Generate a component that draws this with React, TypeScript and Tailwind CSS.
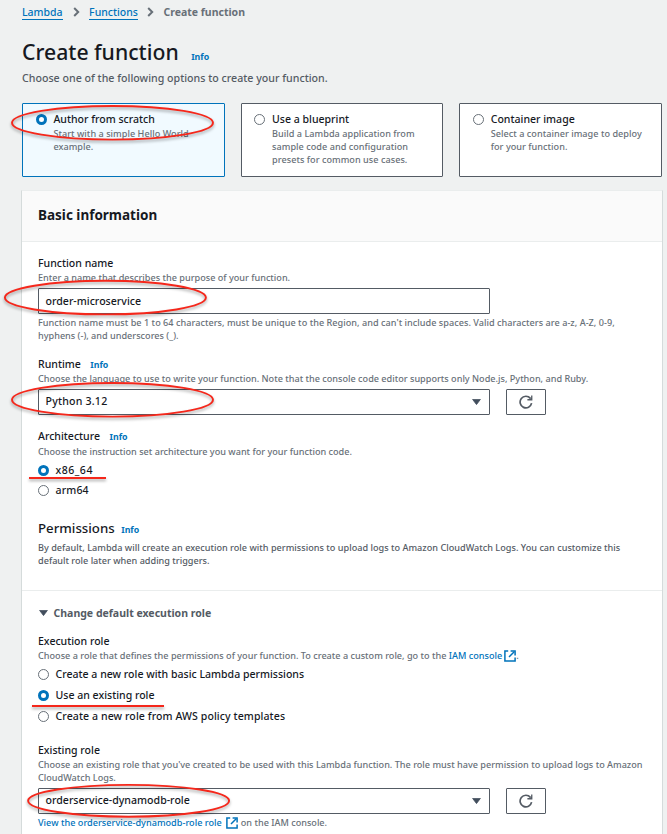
import type { ReactNode } from "react";

function Radio({ checked = false, className = "" }: { checked?: boolean; className?: string }) {
  return (
    <span
      className={`block size-[11px] shrink-0 rounded-full bg-white ${
        checked ? "border-[3.5px] border-[#0073bb]" : "border border-[#687078]"
      } ${className}`}
    />
  );
}

function Info({ className = "" }: { className?: string }) {
  return <a className={`text-[8.8px] font-bold text-[#0073bb] ${className}`}>Info</a>;
}

function Chevron() {
  return (
    <svg width="7" height="10" viewBox="0 0 7 10" fill="none" stroke="#687078" strokeWidth="2">
      <path d="M1.2 1 5.2 5 1.2 9" />
    </svg>
  );
}

function Caret() {
  return (
    <svg width="9" height="6" viewBox="0 0 9 6" className="shrink-0">
      <path d="M0.6 0.4H8.4L4.5 5.6Z" fill="#414d5c" stroke="#414d5c" strokeWidth="0.8" strokeLinejoin="round" />
    </svg>
  );
}

function RefreshButton() {
  return (
    <button className="flex h-[26px] w-10 items-center justify-center rounded-[1px] border border-[#545b64] bg-white">
      <svg width="14" height="14" viewBox="0 0 14 14" fill="none" stroke="#545b64" strokeWidth="1.7">
        <path d="M12.6 8.2A5.8 5.8 0 1 1 11.4 3.4" />
        <path d="M13.4 0.4V5.4H8.4V4.1H10.6L12.1 2.8V0.4Z" fill="#545b64" stroke="none" />
      </svg>
    </button>
  );
}

function ExternalIcon() {
  return (
    <svg width="12" height="12" viewBox="0 0 12 12" fill="none" stroke="#0073bb" strokeWidth="1.5" className="shrink-0">
      <path d="M4.2 0.9H0.9V11.1H11.1V7.6" />
      <path d="M10.2 1.8 5 7" />
      <path d="M6.6 0.9H11.1V5.4" />
    </svg>
  );
}

function Small({
  children,
  color = "text-[#687078]",
  className = "",
}: {
  children: ReactNode;
  color?: string;
  className?: string;
}) {
  return (
    <p className={`text-[9.12px] leading-[13px] font-medium whitespace-nowrap ${color} ${className}`}>{children}</p>
  );
}

function Label({ children, className = "" }: { children: ReactNode; className?: string }) {
  return (
    <h3 className={`flex h-4 items-baseline text-[10.55px] leading-4 font-medium whitespace-nowrap ${className}`}>
      {children}
    </h3>
  );
}

function Card({ title, lines, selected = false }: { title: string; lines: string[]; selected?: boolean }) {
  return (
    <div
      className={`flex h-[74px] gap-[6.8px] rounded-[1px] border pt-[7px] pl-[12.6px] ${
        selected ? "border-[#0073bb] bg-[#f1faff]" : "border-[#545b64] bg-white"
      }`}
    >
      <Radio checked={selected} className="mt-[3px]" />
      <div>
        <Label>{title}</Label>
        {lines.map((line) => (
          <Small key={line} className="tracking-[0.03px]">
            {line}
          </Small>
        ))}
      </div>
    </div>
  );
}

function Option({
  label,
  checked = false,
  className = "",
  textClass = "",
}: {
  label: string;
  checked?: boolean;
  className?: string;
  textClass?: string;
}) {
  return (
    <div className={`flex h-4 items-center gap-[6.5px] ${className}`}>
      <Radio checked={checked} className="mt-px" />
      <span className={`text-[10.55px] leading-4 font-medium whitespace-nowrap ${textClass}`}>{label}</span>
    </div>
  );
}

function Field({ value, select = false, textClass = "" }: { value: string; select?: boolean; textClass?: string }) {
  return (
    <div className="flex h-[26px] w-[452px] items-center justify-between rounded-[1px] border border-[#545b64] bg-white pr-2 pl-[6.5px]">
      <span className={`text-[10.6px] leading-4 font-medium ${select ? "pb-[2px]" : ""} ${textClass}`}>{value}</span>
      {select && <Caret />}
    </div>
  );
}

function Annotations() {
  return (
    <svg
      width="667"
      height="834"
      viewBox="0 0 667 834"
      fill="none"
      stroke="#f5271b"
      strokeWidth="1.9"
      className="pointer-events-none absolute top-0 left-0 drop-shadow-[0_2px_1.5px_rgba(0,0,0,0.35)]"
    >
      <ellipse cx="112.5" cy="122.8" rx="100.5" ry="16.8" />
      <ellipse cx="105.4" cy="297.6" rx="100.5" ry="16.8" />
      <ellipse cx="112.5" cy="399.8" rx="100.5" ry="16.8" />
      <ellipse cx="128.6" cy="800.8" rx="100.5" ry="15.9" />
      <path d="M29 478H106M32 706H164" strokeWidth="2" />
    </svg>
  );
}

export default function App() {
  return (
    <div className="relative h-[834px] w-[667px] overflow-hidden bg-[#eff1f1] font-['Noto_Sans','Open_Sans',sans-serif] text-[#16191f]">
      <nav className="flex h-5 items-center pt-1 pl-[22px] text-[10.5px] leading-4 font-medium">
        <a className="h-4 border-b border-[#0073bb] text-[#0073bb]">Lambda</a>
        <span className="mr-[9.5px] ml-[10px]">
          <Chevron />
        </span>
        <a className="h-4 border-b border-[#0073bb] text-[#0073bb]">Functions</a>
        <span className="mr-[9px] ml-[9.5px]">
          <Chevron />
        </span>
        <span className="text-[10.5px] font-bold text-[#687078]">Create function</span>
      </nav>

      <header className="pt-[17px] pl-[22px]">
        <div className="flex h-[30px] items-baseline">
          <h1 className="text-[21.2px] leading-[30px] font-medium">Create function</h1>
          <Info className="ml-[12.5px]" />
        </div>
        <p className="mt-[3px] text-[10.65px] leading-4 font-medium text-[#545b64]">
          Choose one of the following options to create your function.
        </p>
      </header>

      <section className="mt-[17px] ml-[22px] grid w-[640px] grid-cols-3 gap-x-4">
        <Card title="Author from scratch" lines={["Start with a simple Hello World", "example."]} selected />
        <Card
          title="Use a blueprint"
          lines={["Build a Lambda application from", "sample code and configuration", "presets for common use cases."]}
        />
        <Card title="Container image" lines={["Select a container image to deploy", "for your function."]} />
      </section>

      <main className="mt-[13px] ml-[21px] h-[660px] w-[642px] border border-[#d5dbdb] border-t-[#eaeded] bg-white">
        <div className="flex h-[51px] items-center border-b border-[#eaeded] bg-[#fafafa] pb-[2px] pl-4">
          <h2 className="text-[13.5px] leading-5 font-bold">Basic information</h2>
        </div>

        <div className="pt-[13px] pl-4">
          <Label>Function name</Label>
          <Small>Enter a name that describes the purpose of your function.</Small>
          <div className="mt-1">
            <Field value="order-microservice" />
          </div>
          <Small className="mt-[2px] tracking-[0.03px]">
            Function name must be 1 to 64 characters, must be unique to the Region, and can't include spaces. Valid
            characters are a-z, A-Z, 0-9,
          </Small>
          <Small>hyphens (-), and underscores (_).</Small>

          <Label className="mt-[14px]">
            Runtime <Info className="ml-[9.5px]" />
          </Label>
          <Small>
            Choose the language to use to write your function. Note that the console code editor supports only Node.js,
            Python, and Ruby.
          </Small>
          <div className="mt-1 flex gap-4">
            <Field value="Python 3.12" select textClass="tracking-[0.2px]" />
            <RefreshButton />
          </div>

          <Label className="mt-[13px]">
            Architecture <Info className="ml-[9.5px]" />
          </Label>
          <Small className="mt-px">Choose the instruction set architecture you want for your function code.</Small>
          <Option className="mt-1" label="x86_64" checked textClass="tracking-[0.5px]" />
          <Option className="mt-1" label="arm64" textClass="tracking-[0.15px]" />

          <h2 className="mt-5 flex h-5 items-baseline text-[13.25px] leading-5 font-medium">
            Permissions <Info className="ml-[6.5px]" />
          </h2>
          <Small className="mt-[3px] tracking-[0.015px]" color="text-[#545b64]">
            By default, Lambda will create an execution role with permissions to upload logs to Amazon CloudWatch Logs.
            You can customize this
          </Small>
          <Small color="text-[#545b64]">default role later when adding triggers.</Small>
        </div>

        <div className="mt-[23px] border-t border-[#eaeded] pt-[14px] pl-4">
          <div className="flex h-4 items-center gap-[5.5px] pl-px text-[10.53px] leading-4 font-bold text-[#545b64]">
            <Caret />
            Change default execution role
          </div>

          <Label className="mt-3">Execution role</Label>
          <Small className="flex">
            Choose a role that defines the permissions of your function. To create a custom role, go to the
            <a className="ml-[2.5px] flex items-center gap-[2px] text-[#0073bb]">
              IAM console <ExternalIcon />
            </a>
            <span>.</span>
          </Small>
          <Option className="mt-1" label="Create a new role with basic Lambda permissions" />
          <Option className="mt-[5px]" label="Use an existing role" checked />
          <Option
            className="mt-[5px]"
            label="Create a new role from AWS policy templates"
            textClass="tracking-[0.09px]"
          />

          <Label className="mt-[18px]">Existing role</Label>
          <Small>
            Choose an existing role that you've created to be used with this Lambda function. The role must have
            permission to upload logs to Amazon
          </Small>
          <Small>CloudWatch Logs.</Small>
          <div className="mt-1 flex gap-4">
            <Field value="orderservice-dynamodb-role" select />
            <RefreshButton />
          </div>
          <Small className="mt-[2px] flex">
            <a className="mr-[3px] flex items-center gap-[4px] text-[#0073bb]">
              <span className="tracking-[0.02px]">View the orderservice-dynamodb-role role</span> <ExternalIcon />
            </a>
            on the IAM console.
          </Small>
        </div>
      </main>

      <Annotations />
    </div>
  );
}
